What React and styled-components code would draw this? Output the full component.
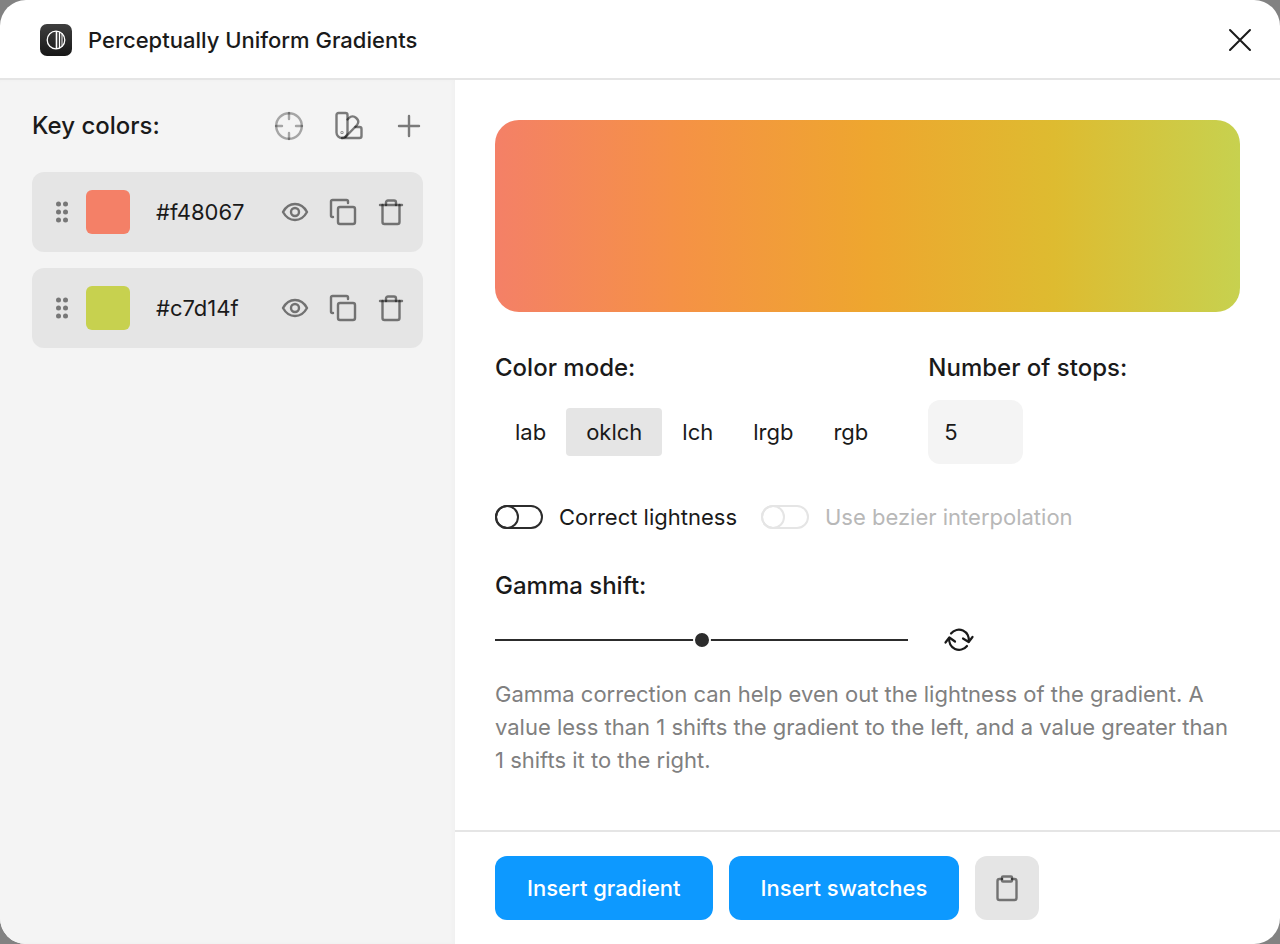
import React, { useState } from "react";
import styled, { createGlobalStyle } from "styled-components";

const modes = ["lab", "oklch", "lch", "lrgb", "rgb"];

const Icon = ({ children, color = "rgba(0, 0, 0, 0.5)", weight = 2.4 }) => (
  <svg
    width="32"
    height="32"
    viewBox="0 0 32 32"
    fill="none"
    stroke={color}
    strokeWidth={weight}
    strokeLinecap="round"
    strokeLinejoin="round"
    aria-hidden="true"
  >
    {children}
  </svg>
);

const TargetIcon = () => (
  <Icon color="rgba(0, 0, 0, 0.32)">
    <circle cx="16" cy="16" r="12.8" />
    <path d="M16 3v6M16 23v6M3 16h6M23 16h6" />
  </Icon>
);

const SwatchIcon = () => (
  <Icon>
    <path d="M5.5 3h7a2 2 0 0 1 2 2v17.500a5.500 5.500 0 0 1-11 0V5a2 2 0 0 1 2-2z" />
    <path d="M14.500 9.500l1.500-1.500c2-2 5-2 7.200 0 2.300 2 2.600 4.800.8 7L12.500 27" />
    <path d="M22.500 17h4a2 2 0 0 1 2 2v7a2 2 0 0 1-2 2H9" />
    <circle cx="9" cy="22.500" r=".4" />
  </Icon>
);

const PlusIcon = () => (
  <Icon>
    <path d="M16 6v20M6 16h20" />
  </Icon>
);

const EyeIcon = () => (
  <Icon>
    <path d="M4 16c3-5.500 7-8 12-8s9 2.500 12 8c-3 5.500-7 8-12 8s-9-2.500-12-8z" />
    <circle cx="16" cy="16" r="4" />
  </Icon>
);

const CopyIcon = () => (
  <Icon>
    <path d="M6 21H5.500A1.500 1.500 0 0 1 4 19.500V5.500A1.500 1.500 0 0 1 5.500 4h14A1.500 1.500 0 0 1 21 5.500V7" />
    <rect x="11" y="11" width="17" height="17" rx="2" />
  </Icon>
);

const TrashIcon = () => (
  <Icon>
    <path d="M5 9h22" />
    <path d="M7.500 9v17a2 2 0 0 0 2 2h13a2 2 0 0 0 2-2V9" />
    <path d="M11 9V6.500a2 2 0 0 1 2-2h6a2 2 0 0 1 2 2V9" />
  </Icon>
);

const ClipboardIcon = () => (
  <Icon>
    <path d="M11 7H8.500a2 2 0 0 0-2 2v17a2 2 0 0 0 2 2h15a2 2 0 0 0 2-2V9a2 2 0 0 0-2-2H21" />
    <rect x="11" y="4.500" width="10" height="5" rx="1" />
  </Icon>
);

const RefreshIcon = () => (
  <Icon color="#1a1a1a" weight={2.2}>
    <path d="M8 9.500A10 10 0 0 1 25.700 17.500M24 22A10 10 0 0 1 6.300 14" />
    <path d="M20 14.500l5.700 3.500 3.800-5M2.500 18.500l3.800-5 5.700 4" />
  </Icon>
);

const CloseIcon = () => (
  <Icon color="#1a1a1a" weight={2}>
    <path d="M6 6l20 20M26 6L6 26" />
  </Icon>
);

const GripIcon = () => (
  <svg width="12" height="22" viewBox="0 0 12 22" fill="#777" aria-hidden="true">
    {[3, 11, 19].map((y) => (
      <React.Fragment key={y}>
        <circle cx="2.500" cy={y} r="2.500" />
        <circle cx="9.500" cy={y} r="2.500" />
      </React.Fragment>
    ))}
  </svg>
);

const Logo = () => (
  <svg width="32" height="32" viewBox="0 0 32 32" fill="none" aria-hidden="true">
    <defs>
      <linearGradient id="logo" x1="0" y1="0" x2="0" y2="1">
        <stop stopColor="#3e3e3e" />
        <stop offset="1" stopColor="#171717" />
      </linearGradient>
    </defs>
    <rect width="32" height="32" rx="7" fill="url(#logo)" />
    <circle cx="16" cy="16" r="8.800" stroke="#fff" strokeWidth="1.300" />
    <path d="M16.500 7v18" stroke="#fff" strokeWidth="1.600" />
    <path d="M19.500 8v16" stroke="#fff" strokeWidth="1.300" />
    <path d="M22 9.500v13" stroke="#fff" />
  </svg>
);

function ColorRow({ color, onCopy, onRemove }) {
  return (
    <Row>
      <Grip type="button" aria-label={`Reorder ${color}`}>
        <GripIcon />
      </Grip>
      <Swatch $color={color} />
      <Hex>{color}</Hex>
      <Actions>
        <IconButton type="button" aria-label={`Hide ${color}`}>
          <EyeIcon />
        </IconButton>
        <IconButton type="button" aria-label={`Duplicate ${color}`} onClick={onCopy}>
          <CopyIcon />
        </IconButton>
        <IconButton type="button" aria-label={`Delete ${color}`} onClick={onRemove}>
          <TrashIcon />
        </IconButton>
      </Actions>
    </Row>
  );
}

function App() {
  const [colors, setColors] = useState(["#f48067", "#c7d14f"]);
  const [mode, setMode] = useState("oklch");
  const [stops, setStops] = useState("5");
  const [correct, setCorrect] = useState(false);
  const [gamma, setGamma] = useState(50);

  const addColor = (color) => setColors([...colors, color]);
  const removeColor = (index) => setColors(colors.filter((_, i) => i !== index));

  return (
    <Window>
      <GlobalStyle />
      <Header>
        <Logo />
        <Title>Perceptually Uniform Gradients</Title>
        <IconButton type="button" aria-label="Close">
          <CloseIcon />
        </IconButton>
      </Header>
      <Body>
        <Sidebar>
          <SidebarHeader>
            <Heading>Key colors:</Heading>
            <Tools>
              <IconButton type="button" aria-label="Pick from selection">
                <TargetIcon />
              </IconButton>
              <IconButton type="button" aria-label="Color styles">
                <SwatchIcon />
              </IconButton>
              <IconButton type="button" aria-label="Add color" onClick={() => addColor("#cccccc")}>
                <PlusIcon />
              </IconButton>
            </Tools>
          </SidebarHeader>
          <ColorList>
            {colors.map((color, i) => (
              <ColorRow
                key={i}
                color={color}
                onCopy={() => addColor(color)}
                onRemove={() => removeColor(i)}
              />
            ))}
          </ColorList>
        </Sidebar>
        <Main>
          <Settings>
            <Preview />
            <Options>
              <Group>
                <Heading>Color mode:</Heading>
                <ModeList>
                  {modes.map((name) => (
                    <Mode
                      key={name}
                      type="button"
                      $active={name === mode}
                      aria-pressed={name === mode}
                      onClick={() => setMode(name)}
                    >
                      {name}
                    </Mode>
                  ))}
                </ModeList>
              </Group>
              <Group>
                <Heading as="label" htmlFor="stops">
                  Number of stops:
                </Heading>
                <StopsInput
                  id="stops"
                  type="text"
                  value={stops}
                  onChange={(e) => setStops(e.target.value)}
                />
              </Group>
            </Options>
            <Switches>
              <SwitchLabel>
                <Switch
                  type="checkbox"
                  checked={correct}
                  onChange={(e) => setCorrect(e.target.checked)}
                />
                Correct lightness
              </SwitchLabel>
              <SwitchLabel $disabled>
                <Switch type="checkbox" disabled />
                Use bezier interpolation
              </SwitchLabel>
            </Switches>
            <Heading as="label" htmlFor="gamma">
              Gamma shift:
            </Heading>
            <SliderRow>
              <Slider
                id="gamma"
                type="range"
                value={gamma}
                onChange={(e) => setGamma(Number(e.target.value))}
              />
              <IconButton type="button" aria-label="Reset gamma" onClick={() => setGamma(50)}>
                <RefreshIcon />
              </IconButton>
            </SliderRow>
            <Hint>
              Gamma correction can help even out the lightness of the gradient. A value less than 1
              shifts the gradient to the left, and a value greater than 1 shifts it to the right.
            </Hint>
          </Settings>
          <Footer>
            <Button type="button">Insert gradient</Button>
            <Button type="button">Insert swatches</Button>
            <CopyButton type="button" aria-label="Copy CSS">
              <ClipboardIcon />
            </CopyButton>
          </Footer>
        </Main>
      </Body>
    </Window>
  );
}

const GlobalStyle = createGlobalStyle`
  * {
    box-sizing: border-box;
  }

  body {
    margin: 0;
    background: #828282;
    color: #1a1a1a;
    font-family: Inter, "Liberation Sans", sans-serif;
    font-size: 22px;
    line-height: 32px;
  }

  button,
  input {
    font: inherit;
    color: inherit;
  }
`;

const Window = styled.div`
  display: flex;
  flex-direction: column;
  min-height: 100vh;
  overflow: hidden;
  border-radius: 26px;
  background: #fff;
`;

const Header = styled.header`
  display: flex;
  align-items: center;
  gap: 16px;
  padding: 24px 24px 22px 40px;
  border-bottom: 2px solid #e5e5e5;
`;

const Title = styled.h1`
  flex: 1;
  margin: 0;
  font-size: 22px;
  font-weight: 500;
`;

const Body = styled.div`
  display: flex;
  flex: 1;
`;

const Sidebar = styled.aside`
  flex: 0 0 455px;
  padding: 28px 32px;
  background: #f4f4f4;
  box-shadow: inset -2px 0 4px rgba(0, 0, 0, 0.02);
`;

const SidebarHeader = styled.div`
  display: flex;
  align-items: center;
  justify-content: space-between;
  height: 36px;
  margin-bottom: 28px;
`;

const Heading = styled.h2`
  margin: 0;
  font-size: 24px;
  font-weight: 500;
  line-height: 32px;
`;

const Tools = styled.div`
  display: flex;
  gap: 28px;
  margin-right: -2px;
`;

const IconButton = styled.button`
  display: flex;
  padding: 0;
  border: none;
  background: none;
  cursor: pointer;
`;

const ColorList = styled.ul`
  display: flex;
  flex-direction: column;
  gap: 16px;
  margin: 0;
  padding: 0;
`;

const Row = styled.li`
  display: flex;
  align-items: center;
  height: 80px;
  padding: 0 16px 0 24px;
  border-radius: 12px;
  background: #e5e5e5;
`;

const Grip = styled(IconButton)`
  cursor: grab;
`;

const Swatch = styled.span`
  width: 44px;
  height: 44px;
  margin: 0 26px 0 18px;
  border-radius: 6px;
  background: ${(props) => props.$color};
`;

const Hex = styled.span`
  flex: 1;
`;

const Actions = styled.div`
  display: flex;
  gap: 16px;
`;

const Main = styled.main`
  display: flex;
  flex: 1;
  flex-direction: column;
  min-width: 0;
`;

const Settings = styled.section`
  flex: 1;
  padding: 40px;
`;

const Preview = styled.div`
  height: 192px;
  margin-bottom: 40px;
  border-radius: 24px;
  background: linear-gradient(
    to right,
    #f48067,
    #f59245 25%,
    #eea62f 50%,
    #debb30 75%,
    #c7d14f
  );
`;

const Options = styled.div`
  display: flex;
  gap: 40px;
`;

const Group = styled.div`
  display: flex;
  flex-direction: column;
  gap: 16px;
`;

const ModeList = styled.div`
  display: flex;
  align-items: center;
  height: 64px;
`;

const Mode = styled.button`
  height: 48px;
  padding: 0 20px;
  border: none;
  border-radius: 4px;
  background: ${(props) => (props.$active ? "#e5e5e5" : "transparent")};
  cursor: pointer;
`;

const StopsInput = styled.input`
  width: 95px;
  height: 64px;
  padding: 0 16px;
  border: none;
  border-radius: 12px;
  background: #f4f4f4;
`;

const Switches = styled.div`
  display: flex;
  gap: 24px;
  margin: 37px 0;
`;

const SwitchLabel = styled.label`
  display: flex;
  align-items: center;
  gap: 16px;
  color: ${(props) => (props.$disabled ? "#b8b8b8" : "#1a1a1a")};
`;

const Switch = styled.input`
  display: flex;
  width: 48px;
  height: 24px;
  margin: 0;
  border: 2px solid #2c2c2c;
  border-radius: 12px;
  appearance: none;

  &::before {
    content: "";
    box-sizing: border-box;
    width: 24px;
    height: 24px;
    margin: -2px;
    border: 2px solid #2c2c2c;
    border-radius: 50%;
  }

  &:checked {
    justify-content: flex-end;
    background: #2c2c2c;
  }

  &:checked::before {
    background: #fff;
  }

  &:disabled,
  &:disabled::before {
    border-color: #e5e5e5;
  }
`;

const SliderRow = styled.div`
  display: flex;
  align-items: center;
  gap: 35px;
  margin: 22px 0;
`;

const Slider = styled.input`
  width: 413px;
  height: 18px;
  margin: 0;
  background: linear-gradient(#2c2c2c, #2c2c2c) center / 100% 2px no-repeat;
  appearance: none;

  &::-webkit-slider-thumb {
    width: 18px;
    height: 18px;
    border: 2px solid #fff;
    border-radius: 50%;
    background: #2c2c2c;
    appearance: none;
  }
`;

const Hint = styled.p`
  margin: 0;
  color: #808080;
  line-height: 33px;
`;

const Footer = styled.footer`
  display: flex;
  gap: 16px;
  padding: 24px 40px;
  border-top: 2px solid #e5e5e5;
`;

const Button = styled.button`
  height: 64px;
  padding: 0 32px;
  border: none;
  border-radius: 12px;
  background: #0d99ff;
  color: #fff;
  font-weight: 500;
  cursor: pointer;
`;

const CopyButton = styled.button`
  display: flex;
  align-items: center;
  justify-content: center;
  width: 64px;
  height: 64px;
  padding: 0;
  border: none;
  border-radius: 12px;
  background: #e5e5e5;
  cursor: pointer;
`;

export default App;
